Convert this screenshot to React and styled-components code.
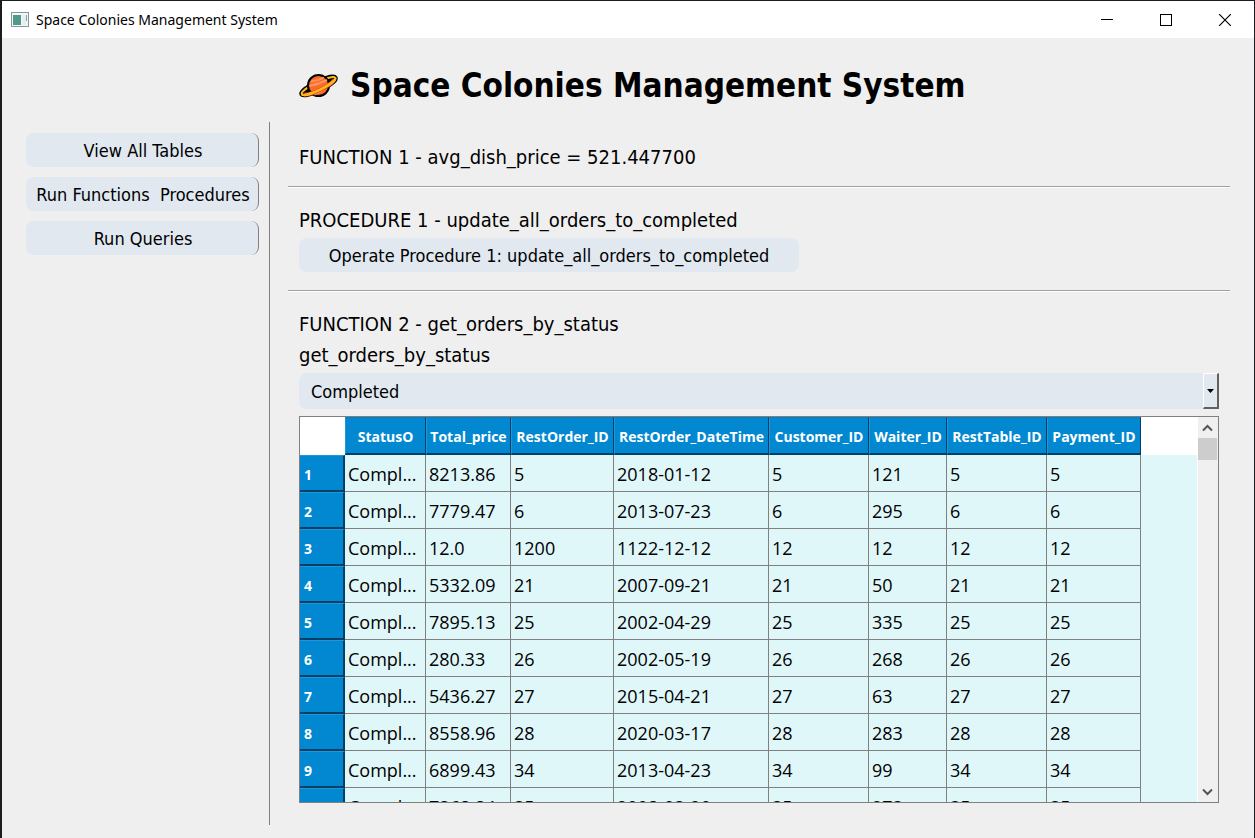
import React from "react";
import styled, { createGlobalStyle } from "styled-components";

const Global = createGlobalStyle`
  * { box-sizing: border-box; }
  body { margin: 0; background: #efefef; }
`;

const tahoma = `"DejaVu Sans Condensed", "DejaVu Sans", sans-serif`;
const segoe = `"Open Sans", "Noto Sans", sans-serif`;

const Window = styled.div`
  display: flex;
  flex-direction: column;
  min-height: 100vh;
  background: #efefef;
  border: solid #1c1c1e;
  border-width: 1px 1px 0 2px;
  color: #000;
  font-family: ${tahoma};
`;

const TitleBar = styled.header`
  display: flex;
  align-items: center;
  height: 37px;
  padding-left: 9px;
  background: #fff;
`;

const WindowName = styled.span`
  flex: 1;
  margin-left: 7px;
  font: 14px/20px "Noto Sans", sans-serif;
`;

const CaptionButton = styled.button`
  display: grid;
  place-items: center;
  width: 59px;
  height: 36px;
  padding: 0;
  border: 0;
  background: none;
`;

const Body = styled.div`
  flex: 1;
  display: grid;
  grid-template-columns: 267px minmax(0, 1fr);
  grid-template-rows: 84px minmax(0, 1fr);
  padding-bottom: 13px;
`;

const Heading = styled.h1`
  grid-column: 2;
  display: flex;
  align-items: center;
  gap: 12px;
  margin: 0;
  padding: 12px 0 0 30px;
  font: bold 33px/40px ${tahoma};
  white-space: nowrap;
`;

const Sidebar = styled.nav`
  display: flex;
  flex-direction: column;
  gap: 10px;
  padding: 11px 10px 0 24px;
`;

const button = `
  height: 34px;
  padding: 2px 0 0;
  background: #e1e8f0;
  border: 0;
  border-radius: 8px;
  color: #000;
  font: 18px/24px ${tahoma};
  white-space: pre;
`;

const NavButton = styled.button`
  ${button}
  padding-left: 2px;
  border-right: 1px solid #808080;
`;

const ActionButton = styled.button`
  ${button}
  width: 500px;
  margin: 2px 0 5px 11px;
`;

const Main = styled.main`
  display: flex;
  flex-direction: column;
  align-items: flex-start;
  padding: 20px 24px 22px 18px;
  border-left: 1px solid #808080;
`;

const Line = styled.div`
  padding-left: 11px;
  font-size: 20px;
  line-height: 31px;
`;

const Rule = styled.hr`
  align-self: stretch;
  margin: 13px 0 17px;
  border: 0;
  border-top: 1px solid #a0a0a0;
  border-bottom: 1px solid #fff;
`;

const Combo = styled.div`
  align-self: stretch;
  display: grid;
  margin: 2px 11px 7px;
  height: 36px;
`;

const Select = styled.select`
  grid-area: 1 / 1;
  appearance: none;
  padding: 2px 12px 0;
  border: 0;
  border-radius: 8px 0 0 8px;
  background: #e1e8f0;
  color: #000;
  font: 18px/24px ${tahoma};
`;

const DropArrow = styled.span`
  grid-area: 1 / 1;
  justify-self: end;
  display: grid;
  place-items: center;
  width: 16px;
  border: solid;
  border-width: 1px 2px 2px 1px;
  border-color: #fff #606060 #606060 #fff;
  background: #e1e8f0;
  pointer-events: none;
`;

const Grid = styled.section`
  align-self: stretch;
  flex: 1 1 0;
  min-height: 200px;
  display: flex;
  margin: 0 11px;
  border: 1px solid #808080;
  background: #fff;
`;

const Viewport = styled.div`
  flex: 1 1 0;
  height: 0;
  min-height: 100%;
  overflow: hidden;
  background: linear-gradient(#fff 38px, #e0f7fa 38px);
`;

const Table = styled.table`
  table-layout: fixed;
  width: 841px;
  border-collapse: separate;
  border-spacing: 0;
`;

const Head = styled.th`
  height: 38px;
  padding: 2px 0 0;
  background: #0288d1;
  border: solid;
  border-width: 1px 1px 2px 1px;
  border-color: #0a7cc0 #013f66 #013f66 #2196d8;
  color: #fff;
  font: bold 14px/20px ${segoe};
  white-space: nowrap;
`;

const Corner = styled.td`
  width: ${(p) => p.$w}px;
  background: #fff;
`;

const RowHead = styled.th`
  height: 37px;
  padding: 4px 0 0 4px;
  background: #0288d1;
  border: solid;
  border-width: 1px 2px 2px 0;
  border-color: #2196d8 #013f66 #013f66;
  color: #fff;
  font: bold 14px/20px ${segoe};
  text-align: left;
`;

const Cell = styled.td`
  height: 37px;
  padding: 2px 0 0 3px;
  background: #e0f7fa;
  border: solid #808080;
  border-width: 0 1px 1px 0;
  font: 18px/24px ${segoe};
  white-space: nowrap;
`;

const ScrollBar = styled.div`
  display: flex;
  flex-direction: column;
  align-items: center;
  width: 21px;
  padding-right: 1px;
  border-left: 1px solid #fff;
  background: #f0f0f0;
`;

const Thumb = styled.div`
  width: 19px;
  height: 22px;
  margin-bottom: auto;
  background: #cdcdcd;
`;

const ScrollButton = styled.button`
  display: grid;
  place-items: center;
  width: 19px;
  height: 21px;
  padding: 0;
  border: 0;
  background: none;
`;

const columns = [
  ["StatusO", 81],
  ["Total_price", 85],
  ["RestOrder_ID", 103],
  ["RestOrder_DateTime", 155],
  ["Customer_ID", 100],
  ["Waiter_ID", 78],
  ["RestTable_ID", 100],
  ["Payment_ID", 94],
];

const rows = [
  ["8213.86", "5", "2018-01-12", "5", "121", "5", "5"],
  ["7779.47", "6", "2013-07-23", "6", "295", "6", "6"],
  ["12.0", "1200", "1122-12-12", "12", "12", "12", "12"],
  ["5332.09", "21", "2007-09-21", "21", "50", "21", "21"],
  ["7895.13", "25", "2002-04-29", "25", "335", "25", "25"],
  ["280.33", "26", "2002-05-19", "26", "268", "26", "26"],
  ["5436.27", "27", "2015-04-21", "27", "63", "27", "27"],
  ["8558.96", "28", "2020-03-17", "28", "283", "28", "28"],
  ["6899.43", "34", "2013-04-23", "34", "99", "34", "34"],
  ["7368.84", "35", "2008-03-20", "35", "273", "35", "35"],
];

const Planet = () => (
  <svg width="39" height="26" viewBox="0 0 39 26" aria-hidden="true">
    <g transform="rotate(-26 19.5 13)">
      <ellipse cx="19.5" cy="13" rx="18.5" ry="4" fill="#111" stroke="#000" strokeWidth="5" />
      <ellipse cx="19.5" cy="13" rx="18.5" ry="4" fill="none" stroke="#fcb81c" strokeWidth="2.2" />
    </g>
    <circle cx="19.5" cy="12.5" r="10.5" fill="#fb6a26" stroke="#000" strokeWidth="2" />
    <path d="M12 8.5Q19 8 25 4.500M10.500 13Q20 11 28 7" stroke="#ff9460" strokeWidth="2" fill="none" />
    <path d="M15 21Q23 18 28.500 12" stroke="#ff9460" strokeWidth="3" fill="none" />
    <g transform="rotate(-26 19.5 13)" fill="none">
      <path d="M3 14.500C9 18 30 18 36 14.500" stroke="#e0481c" strokeWidth="4" />
      <path d="M1 13C1 18.300 38 18.300 38 13" stroke="#fcb81c" strokeWidth="2.500" />
    </g>
  </svg>
);

const AppIcon = () => (
  <svg width="18" height="15" viewBox="0 0 18 15" aria-hidden="true">
    <rect x="0.500" y="0.500" width="17" height="14" fill="#f4f6f8" stroke="#8a959d" />
    <rect x="2" y="3" width="8" height="10" fill="#4f9a8b" />
    <rect x="11" y="3" width="4" height="10" fill="#e6eeee" />
    <path d="M15.500 3v6" stroke="#6fae9f" />
  </svg>
);

const Chevron = ({ down }) => (
  <svg width="11" height="8" viewBox="0 0 11 8" aria-hidden="true">
    <path d={down ? "M1 1.500 5.500 6 10 1.500" : "M1 6.500 5.500 2 10 6.500"} fill="none" stroke="#555" strokeWidth="2" />
  </svg>
);

export default function App() {
  return (
    <>
      <Global />
      <Window>
        <TitleBar>
          <AppIcon />
          <WindowName>Space Colonies Management System</WindowName>
          <CaptionButton aria-label="Minimize">
            <svg width="12" height="12"><path d="M0 5.500h12" stroke="#000" /></svg>
          </CaptionButton>
          <CaptionButton aria-label="Maximize">
            <svg width="12" height="12"><rect x="0.500" y="0.500" width="11" height="11" fill="none" stroke="#000" /></svg>
          </CaptionButton>
          <CaptionButton aria-label="Close">
            <svg width="12" height="12"><path d="M0 0 12 12M12 0 0 12" stroke="#000" strokeWidth="1.200" /></svg>
          </CaptionButton>
        </TitleBar>
        <Body>
          <Heading><Planet />Space Colonies Management System</Heading>
          <Sidebar>
            <NavButton>View All Tables</NavButton>
            <NavButton>{"Run Functions  Procedures"}</NavButton>
            <NavButton>Run Queries</NavButton>
          </Sidebar>
          <Main>
            <Line>FUNCTION 1 - avg_dish_price = 521.447700</Line>
            <Rule />
            <Line>PROCEDURE 1 - update_all_orders_to_completed</Line>
            <ActionButton>Operate Procedure 1: update_all_orders_to_completed</ActionButton>
            <Rule />
            <Line>FUNCTION 2 - get_orders_by_status</Line>
            <Line as="label" htmlFor="status">get_orders_by_status</Line>
            <Combo>
              <Select id="status" defaultValue="Completed">
                <option>Completed</option>
              </Select>
              <DropArrow>
                <svg width="7" height="4"><path d="M0 0h7L3.500 4z" /></svg>
              </DropArrow>
            </Combo>
            <Grid>
              <Viewport>
                <Table>
                  <thead>
                    <tr>
                      <Corner $w={45} />
                      {columns.map(([name, w]) => (
                        <Head key={name} style={{ width: w }} scope="col">{name}</Head>
                      ))}
                    </tr>
                  </thead>
                  <tbody>
                    {rows.map((r, i) => (
                      <tr key={i}>
                        <RowHead scope="row">{i + 1}</RowHead>
                        <Cell>Compl...</Cell>
                        {r.map((v, j) => <Cell key={j}>{v}</Cell>)}
                      </tr>
                    ))}
                  </tbody>
                </Table>
              </Viewport>
              <ScrollBar>
                <ScrollButton aria-label="Scroll up"><Chevron /></ScrollButton>
                <Thumb />
                <ScrollButton aria-label="Scroll down"><Chevron down /></ScrollButton>
              </ScrollBar>
            </Grid>
          </Main>
        </Body>
      </Window>
    </>
  );
}
